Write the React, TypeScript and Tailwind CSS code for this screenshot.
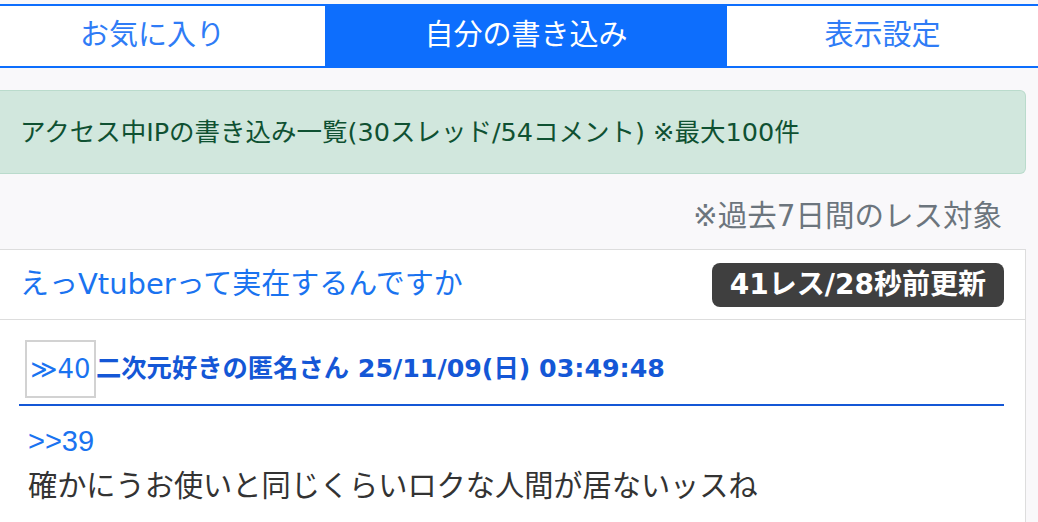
import React from "react";

const F = { fontFamily: '"DejaVu Sans", "Noto Sans CJK JP", sans-serif' };
const L = { fontFamily: '"Liberation Sans", "Noto Sans CJK JP", sans-serif' };

export default function App() {
  return (
    <div style={F} className="min-h-screen overflow-hidden bg-[#f9f8fa] pt-[4px]">
      <div className="-ml-[20px] grid h-[64px] grid-cols-[345px_402px_1fr] border-y-2 border-[#0d6efd] bg-white text-[29px]">
        <div className="flex items-center justify-center text-[#2f7cf6]">お気に入り</div>
        <div className="flex items-center justify-center bg-[#0d6efd] text-white">自分の書き込み</div>
        <div className="flex items-center justify-center text-[#2f7cf6]">表示設定</div>
      </div>
      <div className="pr-[12px]">
        <div className="mt-[22px] flex h-[84px] items-center rounded-r-[6px] border border-l-0 border-[#badbcc] bg-[#d1e7dd] pl-[20px] text-[25.5px] text-[#0f5132]">
          アクセス中IPの書き込み一覧(30スレッド/54コメント) ※最大100件
        </div>
        <div className="flex h-[75px] items-center justify-end pr-[24px] pt-[10px] text-[29.5px] text-[#6c757d]">
          ※過去7日間のレス対象
        </div>
        <div className="border border-l-0 border-[#dddddd] bg-white">
          <div className="flex h-[70px] items-center justify-between border-b border-[#dddddd] pl-[20px] pr-[21px]">
            <span className="text-[29px] text-[#1a73f0]">えっVtuberって実在するんですか</span>
            <span className="flex h-[44px] items-center rounded-[8px] bg-[#3f3f3f] px-[18px] text-[28px] font-semibold text-white">
              41レス/28秒前更新
            </span>
          </div>
          <div className="pl-[19px] pr-[21px] pt-[20px]">
            <div className="flex items-center border-b-2 border-[#1457d6] pb-[6px] pl-[6px]">
              <span className="flex h-[58px] w-[71px] items-center justify-center border-2 border-[#d2d2d2] text-[26px] text-[#1a73f0]">
                ≫40
              </span>
              <span className="text-[25.3px] font-bold text-[#1457d6]">二次元好きの匿名さん 25/11/09(日) 03:49:48</span>
            </div>
            <div className="pl-[9px] pt-[13px] pb-[15px]">
              <div style={L} className="h-[44px] text-[29px] leading-[44px] text-[#1a73f0]">&gt;&gt;39</div>
              <div className="h-[46px] text-[29.2px] leading-[46px] text-[#333333]">
                確かにうお使いと同じくらいロクな人間が居ないッスね
              </div>
            </div>
          </div>
        </div>
      </div>
    </div>
  );
}
